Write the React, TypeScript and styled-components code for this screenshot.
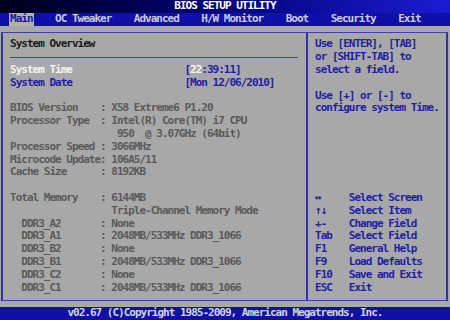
import React from "react";
import styled, { createGlobalStyle } from "styled-components";

const ROW = 12.8;
const CH = 5.625;

const GlobalStyle = createGlobalStyle`
  *, *::before, *::after { box-sizing: border-box; }
  html, body { margin: 0; padding: 0; background: #a8a8a8; overflow: hidden; }
  #root { width: 450px; height: 320px; }
`;

const Screen = styled.div`
  width: 450px;
  height: 320px;
  display: flex;
  flex-direction: column;
  background: #a8a8a8;
  font-family: "DejaVu Sans Mono", "Liberation Mono", monospace;
  font-size: 11px;
  font-weight: bold;
  letter-spacing: ${CH - 11 * 0.602}px;
  line-height: ${ROW}px;
  white-space: pre;
  overflow: hidden;
`;

const TitleBar = styled.div`
  height: ${ROW}px;
  flex: none;
  background: linear-gradient(90deg, #00001c 0%, #000070 45%, #1c1cd4 100%);
  color: #ffffff;
  text-align: center;
`;

const MenuBar = styled.div`
  height: ${ROW}px;
  flex: none;
  background: #1010a8;
  display: flex;
  gap: ${CH * 4}px;
  padding-left: 10px;
`;

const MenuItem = styled.span<{ $active?: boolean }>`
  color: ${(p) => (p.$active ? "#1a1aa0" : "#cacad6")};
  background: ${(p) => (p.$active ? "#b0b0b0" : "transparent")};
  padding: 0 1px;
  margin: 0 -1px;
`;

const Body = styled.div`
  flex: 1;
  display: flex;
  padding: 6px 2px 5.9px 1px;
`;

const Frame = styled.div`
  flex: 1;
  display: flex;
  border-top: 1px solid #4040ac;
  border-bottom: 1px solid #4040ac;
  border-left: 2px solid #3030a8;
  border-right: 2px solid #3030a8;
`;

const LeftPanel = styled.div`
  width: 305px;
  flex: none;
  border-right: 2px solid #3030a8;
  padding: 5.8px 8px 5.9px 7px;
  display: flex;
  flex-direction: column;
`;

const RightPanel = styled.div`
  flex: 1;
  padding: 5.8px 0 5.9px 7px;
  display: flex;
  flex-direction: column;
  color: #1e1ea6;
`;

const Line = styled.div<{ $color?: string }>`
  height: ${ROW}px;
  color: ${(p) => p.$color ?? "inherit"};
`;

const Rule = styled.div`
  height: ${ROW}px;
  display: flex;
  align-items: center;
  &::after {
    content: "";
    flex: 1;
    height: 1px;
    background: #4040ac;
  }
`;

const SettingRow = styled.div<{ $color: string }>`
  height: ${ROW}px;
  display: grid;
  grid-template-columns: ${CH * 31}px 1fr;
  color: ${(p) => p.$color};
`;

const Value = styled.span`
  color: #1e1ea6;
`;

const Hot = styled.span`
  color: #f4f4f4;
`;

const InfoRow = styled.div<{ $indent?: boolean }>`
  height: ${ROW}px;
  display: grid;
  grid-template-columns: ${CH * 16}px ${CH * 2}px 1fr;
  color: #5a5a5a;
  & > span:first-child {
    padding-left: ${(p) => (p.$indent ? CH * 2 : 0)}px;
  }
`;

const Spacer = styled.div`
  height: ${ROW}px;
`;

const KeyList = styled.div`
  margin-top: auto;
  display: flex;
  flex-direction: column;
`;

const KeyRow = styled.div`
  height: ${ROW}px;
  display: grid;
  grid-template-columns: ${CH * 6}px 1fr;
`;

const Footer = styled.div`
  height: ${ROW}px;
  flex: none;
  background: #1010a8;
  color: #d2d2dc;
  text-align: center;
`;

const menu = ["Main", "OC Tweaker", "Advanced", "H/W Monitor", "Boot", "Security", "Exit"];

type Info = { label: string; value: string; indent?: boolean; colon?: boolean };

const group1: Info[] = [
  { label: "BIOS Version", value: "X58 Extreme6 P1.20" },
  { label: "Processor Type", value: "Intel(R) Core(TM) i7 CPU" },
  { label: "", value: " 950  @ 3.07GHz (64bit)", colon: false },
  { label: "Processor Speed", value: "3066MHz" },
  { label: "Microcode Update", value: "106A5/11" },
  { label: "Cache Size", value: "8192KB" },
];

const group2: Info[] = [
  { label: "Total Memory", value: "6144MB" },
  { label: "", value: "Triple-Channel Memory Mode", colon: false },
  { label: "DDR3_A2", value: "None", indent: true },
  { label: "DDR3_A1", value: "2048MB/533MHz DDR3_1066", indent: true },
  { label: "DDR3_B2", value: "None", indent: true },
  { label: "DDR3_B1", value: "2048MB/533MHz DDR3_1066", indent: true },
  { label: "DDR3_C2", value: "None", indent: true },
  { label: "DDR3_C1", value: "2048MB/533MHz DDR3_1066", indent: true },
];

const keys: [string, string][] = [
  ["↔", "Select Screen"],
  ["↑↓", "Select Item"],
  ["+-", "Change Field"],
  ["Tab", "Select Field"],
  ["F1", "General Help"],
  ["F9", "Load Defaults"],
  ["F10", "Save and Exit"],
  ["ESC", "Exit"],
];

const renderInfo = (r: Info, i: number) => (
  <InfoRow key={i} $indent={r.indent}>
    <span>{r.label}</span>
    <span>{r.colon === false ? "" : ":"}</span>
    <span>{r.value}</span>
  </InfoRow>
);

export default function App() {
  return (
    <>
      <GlobalStyle />
      <Screen>
        <TitleBar>BIOS SETUP UTILITY</TitleBar>
        <MenuBar>
          {menu.map((m, i) => (
            <MenuItem key={m} $active={i === 0}>
              {m}
            </MenuItem>
          ))}
        </MenuBar>
        <Body>
          <Frame>
            <LeftPanel>
              <Line $color="#1a1a1a">System Overview</Line>
              <Rule />
              <SettingRow $color="#f4f4f4">
                <span>System Time</span>
                <Value>
                  [<Hot>22</Hot>:39:11]
                </Value>
              </SettingRow>
              <SettingRow $color="#1e1ea6">
                <span>System Date</span>
                <Value>[Mon 12/06/2010]</Value>
              </SettingRow>
              <Spacer />
              {group1.map(renderInfo)}
              <Spacer />
              {group2.map(renderInfo)}
            </LeftPanel>
            <RightPanel>
              <Line>Use [ENTER], [TAB]</Line>
              <Line>or [SHIFT-TAB] to</Line>
              <Line>select a field.</Line>
              <Spacer />
              <Line>Use [+] or [-] to</Line>
              <Line>configure system Time.</Line>
              <KeyList>
                {keys.map(([k, d]) => (
                  <KeyRow key={k}>
                    <span>{k}</span>
                    <span>{d}</span>
                  </KeyRow>
                ))}
              </KeyList>
            </RightPanel>
          </Frame>
        </Body>
        <Footer>v02.67 (C)Copyright 1985-2009, American Megatrends, Inc.</Footer>
      </Screen>
    </>
  );
}
